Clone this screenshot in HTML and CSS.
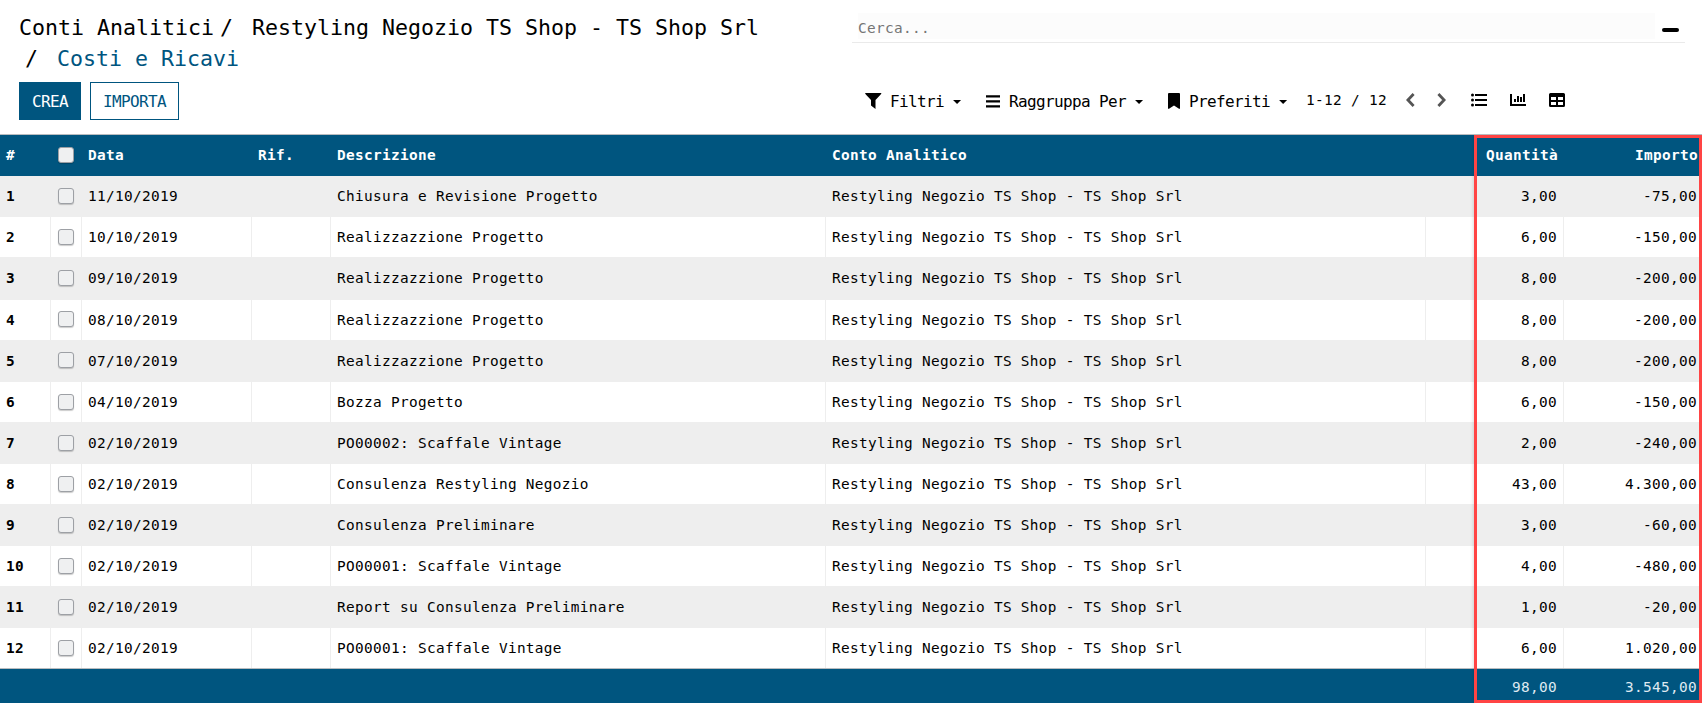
FILE: index.html
```html
<!DOCTYPE html>
<html lang="it"><head><meta charset="utf-8"><title>Costi e Ricavi</title><link rel="stylesheet" href="styles.css"></head>
<body>
<header class="panel">
  <div class="left">
    <nav class="crumbs"><div class="crumb-line"><span>Conti Analitici</span><span class="sep">/</span><span>Restyling Negozio TS Shop - TS Shop Srl</span></div><div class="crumb-line"><span class="sep">/</span><span class="current">Costi e Ricavi</span></div></nav>
    <div class="buttons"><button class="btn primary">CREA</button><button class="btn">IMPORTA</button></div>
  </div>
  <div class="right">
    <div class="search"><input type="text" placeholder="Cerca..."><span class="minus"></span></div>
    <div class="tools">
      <span class="tool"><svg class="funnel" width="17" height="16" viewBox="0 0 17 16"><path d="M0 0h16.500l-.8 1.600L10.500 7v9L6 12.500V7L.8 1.600z"/></svg>Filtri<i class="caret"></i></span>
      <span class="tool group"><svg class="bars" width="15" height="13" viewBox="0 0 15 13"><path d="M0 .2h14v2.200H0zM0 5.200h14v2.200H0zM0 10.200h14v2.200H0z"/></svg>Raggruppa Per<i class="caret"></i></span>
      <span class="tool fav"><svg class="mark" width="12" height="16" viewBox="0 0 12 16"><path d="M1 0h10a1 1 0 0 1 1 1v14.800H11L6 12.500 1 15.800H0V1a1 1 0 0 1 1-1z"/></svg>Preferiti<i class="caret"></i></span>
      <span class="pager">1-12 / 12</span>
      <svg class="prev" width="9" height="14" viewBox="0 0 9 14"><path d="M7.600 1 1.900 7l5.700 6"/></svg>
      <svg class="next" width="9" height="14" viewBox="0 0 9 14"><path d="M1.400 1l5.700 6-5.700 6"/></svg>
      <svg class="v-list" width="17" height="14" viewBox="0 0 17 14"><path d="M4 1h12v2H4zM4 6h12v2H4zM4 11h12v2H4z"/><circle cx="1.500" cy="2" r="1.500"/><circle cx="1.500" cy="7" r="1.500"/><circle cx="1.500" cy="12" r="1.500"/></svg>
      <svg class="v-graph" width="16" height="12" viewBox="0 0 16 12"><path d="M0 0h2v10h14v2H0zM4 5h2v3H4zM7 2h2v6H7zM10 3h2v5h-2zM13 0h2v8h-2z"/></svg>
      <svg class="v-pivot" width="16" height="14" viewBox="0 0 16 14"><path fill-rule="evenodd" d="M1.500 0h13A1.500 1.500 0 0 1 16 1.500v11a1.500 1.500 0 0 1-1.500 1.500h-13A1.500 1.500 0 0 1 0 12.500v-11A1.500 1.500 0 0 1 1.500 0zM2 4v3h5V4zM9 4v3h5V4zM2 9v3h5V9zM9 9v3h5V9z"/></svg>
    </div>
  </div>
</header>
<main class="list" id="list">
  <div class="row head"><span>#</span><span><i class="check"></i></span><span>Data</span><span>Rif.</span><span>Descrizione</span><span>Conto Analitico</span><span></span><span class="num">Quantità</span><span class="num">Importo</span></div>
  <div class="rows" id="rows"></div>
  <div class="row foot"><span></span><span></span><span></span><span></span><span></span><span></span><span></span><span class="num">98,00</span><span class="num">3.545,00</span></div>
  <div class="highlight"></div>
</main>
<script src="rows.js"></script>
</body></html>
```
FILE: styles.css
```css
* { box-sizing: border-box; }
body { margin: 0; width: 1702px; height: 703px; overflow: hidden; background: #fff; color: #000; font: 15px "DejaVu Sans Mono", monospace; }
.panel { display: flex; height: 135px; border-bottom: 1px solid #b9bcbf; }
.left { width: 852px; padding: 12px 0 0 19px; }
.crumbs { height: 70px; font-size: 21.6px; line-height: 31px; white-space: pre; }
.crumb-line { display: flex; height: 31px; }
.sep { padding: 0 19px 0 6px; }
.current { color: #00557f; }
.buttons { display: flex; gap: 9px; }
.btn { height: 38px; padding: 0 12px; border: 1px solid #00557f; border-radius: 0; background: #fff; color: #00557f; font: 16px "DejaVu Sans Mono", monospace; letter-spacing: -.63px; }
.primary { background: #00557f; color: #fff; }
.right { width: 850px; }
.search { display: flex; width: 833px; height: 43px; border-bottom: 1px solid #eaeaea; padding: 13px 0 0 6px; }
.search input { width: 797px; height: 26px; padding: 3px 0 0; border: 0; background: #fcfcfc; font: 14.4px "DejaVu Sans Mono", monospace; letter-spacing: .33px; }
.search input::placeholder { color: #757575; }
.minus { width: 17px; height: 4px; border-radius: 2px; background: #000; margin: 15px 0 0 7px; }
.tools { display: flex; align-items: center; height: 38px; margin-top: 39px; padding-left: 13px; }
.tool { display: flex; align-items: center; font-size: 16px; letter-spacing: -.63px; white-space: nowrap; }
.tool svg { margin-right: 8px; }
.caret { width: 8px; height: 4px; background: #000; clip-path: polygon(0 0, 100% 0, 50% 100%); margin-left: 9px; margin-top: 2px; }
.group { margin-left: 25px; }
.fav { margin-left: 25px; }
.tool .mark { margin-right: 9px; }
.pager { margin-left: 19px; font-size: 14.4px; letter-spacing: .33px; margin-top: -2px; }
.prev, .next { fill: none; stroke: #555; stroke-width: 2.8; margin-top: -2px; }
.prev { margin-left: 19px; }
.next { margin-left: 22px; }
.v-list, .v-graph, .v-pivot { margin-top: -2px; }
.v-list { margin-left: 25px; }
.v-list path, .v-graph { shape-rendering: crispEdges; }
.v-graph { margin-left: 22px; }
.v-pivot { margin-left: 23px; }
.list { position: relative; height: 568px; overflow: hidden; font-size: 14.4px; letter-spacing: .33px; }
.row { display: grid; grid-template-columns: 51px 31px 170px 79px 495px 600px 46px 92px 138px; white-space: pre; }
.row > span { display: flex; align-items: center; padding: 0 6px; border-right: 1px solid #eee; }
.row > span:nth-child(2) { padding-left: 7px; }
.row > .num { justify-content: flex-end; }
.row > span:last-child { padding-right: 5px; border: 0; }
.row > span:first-child { font-weight: 700; }
.row > span:nth-child(7) { border: 0; }
.head { height: 41px; padding-bottom: 1px; background: #00557f; color: #fff; font-weight: 700; }
.row.head > .num { padding-right: 5px; }
.row.head > span:last-child { padding-right: 4px; }
.head > span, .foot > span { border-color: transparent; }
.rows .row { height: 40px; }
.rows .row:nth-child(odd) { height: 42px; background: #eee; }
.rows .row:nth-child(1) { height: 41px; padding-bottom: 1px; }
.rows .row:nth-child(3) { height: 43px; padding-bottom: 2px; }
.rows .row:nth-child(4) .check, .rows .row:nth-child(5) .check { margin-bottom: 2px; }
.check { width: 16px; height: 16px; border: 1px solid #9da0a5; border-radius: 3px; background: #eff0f1; box-shadow: 0 1px 1px #0003; }
.foot { height: 37px; background: #00557f; color: #dfe9f1; border-top: 1px solid #b9bcbf; }
.highlight { position: absolute; left: 1474px; top: 0; width: 228px; height: 568px; border: 3px solid #ff4444; box-shadow: 0 0 4px #0003; }
```
FILE: rows.js
```js
const account = 'Restyling Negozio TS Shop - TS Shop Srl';
const entries = [
  ['11/10/2019', 'Chiusura e Revisione Progetto', '3,00', '-75,00'],
  ['10/10/2019', 'Realizzazzione Progetto', '6,00', '-150,00'],
  ['09/10/2019', 'Realizzazzione Progetto', '8,00', '-200,00'],
  ['08/10/2019', 'Realizzazzione Progetto', '8,00', '-200,00'],
  ['07/10/2019', 'Realizzazzione Progetto', '8,00', '-200,00'],
  ['04/10/2019', 'Bozza Progetto', '6,00', '-150,00'],
  ['02/10/2019', 'PO00002: Scaffale Vintage', '2,00', '-240,00'],
  ['02/10/2019', 'Consulenza Restyling Negozio', '43,00', '4.300,00'],
  ['02/10/2019', 'Consulenza Preliminare', '3,00', '-60,00'],
  ['02/10/2019', 'PO00001: Scaffale Vintage', '4,00', '-480,00'],
  ['02/10/2019', 'Report su Consulenza Preliminare', '1,00', '-20,00'],
  ['02/10/2019', 'PO00001: Scaffale Vintage', '6,00', '1.020,00']
];
document.getElementById('rows').innerHTML = entries.map((e, i) =>
  `<div class="row"><span>${i + 1}</span><span><i class="check"></i></span><span>${e[0]}</span><span></span><span>${e[1]}</span><span>${account}</span><span></span><span class="num">${e[2]}</span><span class="num">${e[3]}</span></div>`
).join('');
```
